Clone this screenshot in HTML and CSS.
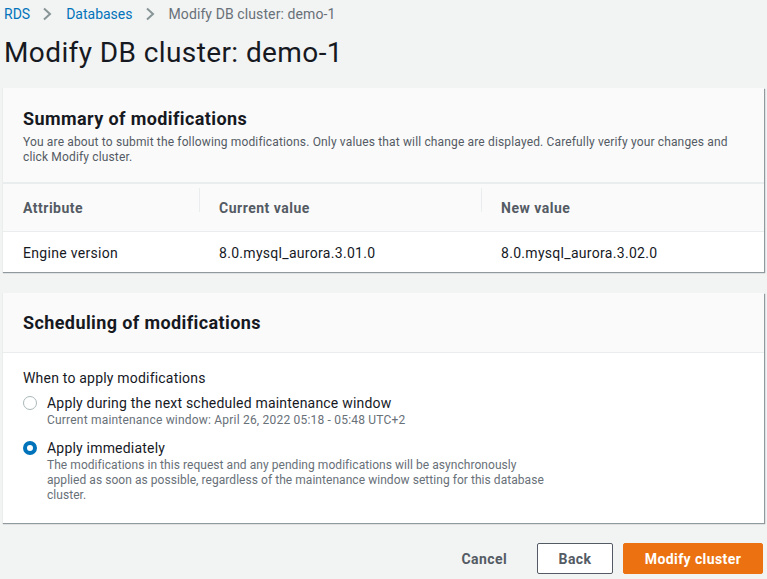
FILE: index.html
```html
<!DOCTYPE html>
<html>
<head>
<meta charset="utf-8">
<link rel="stylesheet" href="styles.css">
</head>
<body>
<nav class="crumbs">
  <a class="crumb-link">RDS</a>
  <svg class="chev" width="10" height="14" viewBox="0 0 10 14"><path d="M2 1.5 L8 7 L2 12.5" fill="none" stroke="#879596" stroke-width="2"/></svg>
  <a class="crumb-link">Databases</a>
  <svg class="chev" width="10" height="14" viewBox="0 0 10 14"><path d="M2 1.5 L8 7 L2 12.5" fill="none" stroke="#879596" stroke-width="2"/></svg>
  <span class="crumb-current">Modify DB cluster: demo-1</span>
</nav>
<h1 class="page-title">Modify DB cluster: demo-1</h1>

<section class="card summary">
  <header class="card-head summary-head">
    <h2 class="card-title">Summary of modifications</h2>
    <p class="card-desc">You are about to submit the following modifications. Only values that will change are displayed. Carefully verify your changes and click Modify cluster.</p>
  </header>
  <div class="table">
    <div class="trow thead">
      <div class="cell c1">Attribute</div>
      <div class="cell c2"><span class="sep"></span>Current value</div>
      <div class="cell c3"><span class="sep"></span>New value</div>
    </div>
    <div class="trow tbody">
      <div class="cell c1">Engine version</div>
      <div class="cell c2">8.0.mysql_aurora.3.01.0</div>
      <div class="cell c3">8.0.mysql_aurora.3.02.0</div>
    </div>
  </div>
</section>

<section class="card sched">
  <header class="card-head sched-head">
    <h2 class="card-title">Scheduling of modifications</h2>
  </header>
  <div class="card-body">
    <div class="field-label">When to apply modifications</div>
    <div class="radio-row">
      <span class="radio"></span>
      <div class="radio-text">
        <div class="radio-label">Apply during the next scheduled maintenance window</div>
        <div class="radio-desc">Current maintenance window: April 26, 2022 05:18 - 05:48 UTC+2</div>
      </div>
    </div>
    <div class="radio-row">
      <span class="radio checked"></span>
      <div class="radio-text">
        <div class="radio-label">Apply immediately</div>
        <div class="radio-desc wrap">The modifications in this request and any pending modifications will be asynchronously applied as soon as possible, regardless of the maintenance window setting for this database cluster.</div>
      </div>
    </div>
  </div>
</section>

<div class="actions">
  <button class="btn link">Cancel</button>
  <button class="btn normal">Back</button>
  <button class="btn primary">Modify cluster</button>
</div>
</body>
</html>
```

FILE: styles.css
```css
* { box-sizing: border-box; }
html, body { margin: 0; padding: 0; }
body {
  background: #f2f3f3;
  font-family: Roboto, "Open Sans", Arial, sans-serif;
  color: #16191f;
  width: 767px;
  height: 579px;
  overflow: hidden;
}
.crumbs {
  display: flex;
  align-items: center;
  height: 26px;
  padding: 1px 0 0 4px;
  font-size: 14px;
}
.crumb-link { color: #0073bb; }
.chev { margin: 0 14px 0 12px; }
.crumb-current { color: #687078; letter-spacing: 0.1px; }
.page-title {
  margin: 10px 0 0 4px;
  font-size: 28px;
  letter-spacing: 0.4px;
  font-weight: 400;
  line-height: 34px;
  height: 52px;
}
.card {
  margin: 0 3px 0 2px;
  background: #fff;
  border-left: 1px solid #eaeded;
  box-shadow: 1px 1px 1px 0 rgba(0, 28, 36, 0.3), 1px 1px 1px 0 rgba(0,28,36,0.15);
}
.card-head {
  background: #fafafa;
}
.summary-head {
  padding: 19px 20px 17px 20px;
}
.card-title {
  margin: 0;
  font-size: 18px;
  font-weight: 700;
  line-height: 24px;
  letter-spacing: 0.4px;
}
.card-desc {
  margin: 4px 0 0;
  font-size: 12px;
  line-height: 15px;
  color: #545b64;
  letter-spacing: 0.15px;
}
.table { font-size: 14px; }
.trow { display: flex; align-items: center; }
.thead {
  background: #fafafa;
  border-top: 2px solid #eaeded;
  border-bottom: 1px solid #eaeded;
  height: 50px;
  font-weight: 700;
  color: #545b64;
  letter-spacing: 0.5px;
}
.tbody { height: 40px; letter-spacing: 0.3px; padding-top: 2px; }
.cell { position: relative; padding-left: 20px; }
.c1 { width: 196px; }
.c2 { width: 282px; }
.c3 { flex: 1; }
.sep {
  position: absolute;
  left: 0;
  top: -12px;
  height: 24px;
  border-left: 1px solid #eaeded;
}
.thead .cell { line-height: 16px; }
.sched { margin-top: 21px; }
.sched-head {
  padding: 18px 20px 17px;
  border-bottom: 1px solid #eaeded;
}
.card-body { padding: 15px 20px 20px; }
.field-label {
  font-size: 14px;
  line-height: 20px;
  margin-bottom: 5px;
  letter-spacing: 0.2px;
}
.radio-row {
  display: flex;
  align-items: flex-start;
  margin-bottom: 10px;
}
.radio-row:last-child { margin-bottom: 0; }
.radio {
  flex: none;
  width: 14px;
  height: 14px;
  border: 1.5px solid #aab7b8;
  border-radius: 50%;
  margin: 3px 10px 0 0;
  background: #fff;
}
.radio.checked { border: 4px solid #0073bb; }
.radio-label { font-size: 14px; line-height: 20px; letter-spacing: 0.2px; }
.radio-desc { font-size: 12px; line-height: 15px; color: #687078; letter-spacing: 0.2px; }
.wrap { width: 510px; letter-spacing: 0.05px; }
.actions {
  display: flex;
  justify-content: flex-end;
  align-items: center;
  gap: 10px;
  padding: 20px 4px 0 0;
}
.btn {
  font-family: inherit;
  font-size: 14px;
  font-weight: 700;
  letter-spacing: 0.4px;
  height: 31px;
  border-radius: 2px;
  padding: 0 20px;
  cursor: pointer;
}
.btn.link { background: none; border: none; color: #545b64; margin-right: 0; }
.btn.normal { background: #fff; border: 1px solid #545b64; color: #545b64; width: 76px; }
.btn.primary { background: #ec7211; border: 1px solid #ec7211; color: #fff; width: 140px; }
```
